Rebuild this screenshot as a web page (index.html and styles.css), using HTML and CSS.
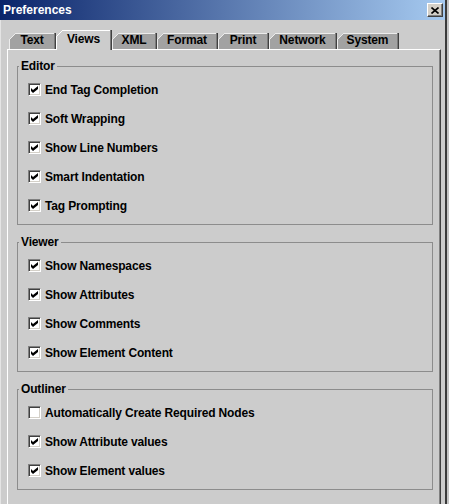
FILE: index.html
```html
<!DOCTYPE html>
<html>
<head>
<meta charset="utf-8">
<title>Preferences</title>
<link rel="stylesheet" href="styles.css">
</head>
<body>
<div class="window">
  <div class="titlebar">
    <span class="title">Preferences</span>
    <span class="close"><svg width="8" height="7" viewBox="0 0 8 7"><path d="M0.5 0.5 L7.5 6.5 M7.5 0.5 L0.5 6.5" stroke="#000" stroke-width="1.6" fill="none"/></svg></span>
  </div>
  <div class="client">
    <div class="tabs">
      <div class="tab t-text">Text</div>
      <div class="tab t-views active">Views</div>
      <div class="tab t-xml">XML</div>
      <div class="tab t-format">Format</div>
      <div class="tab t-print">Print</div>
      <div class="tab t-network">Network</div>
      <div class="tab t-system">System</div>
    </div>
    <div class="panel">
      <fieldset class="group">
        <legend>Editor</legend>
        <div class="row"><span class="cb on"></span><span>End Tag Completion</span></div>
        <div class="row"><span class="cb on"></span><span>Soft Wrapping</span></div>
        <div class="row"><span class="cb on"></span><span>Show Line Numbers</span></div>
        <div class="row"><span class="cb on"></span><span>Smart Indentation</span></div>
        <div class="row"><span class="cb on"></span><span>Tag Prompting</span></div>
      </fieldset>
      <fieldset class="group">
        <legend>Viewer</legend>
        <div class="row"><span class="cb on"></span><span>Show Namespaces</span></div>
        <div class="row"><span class="cb on"></span><span>Show Attributes</span></div>
        <div class="row"><span class="cb on"></span><span>Show Comments</span></div>
        <div class="row"><span class="cb on"></span><span>Show Element Content</span></div>
      </fieldset>
      <fieldset class="group">
        <legend>Outliner</legend>
        <div class="row"><span class="cb"></span><span>Automatically Create Required Nodes</span></div>
        <div class="row"><span class="cb on"></span><span>Show Attribute values</span></div>
        <div class="row"><span class="cb on"></span><span>Show Element values</span></div>
      </fieldset>
    </div>
  </div>
</div>
</body>
</html>
```

FILE: styles.css
```css
* { box-sizing: border-box; }
html, body { margin: 0; padding: 0; }
body {
  width: 449px;
  height: 504px;
  overflow: hidden;
  background: #c4c4c4;
  font-family: "Liberation Sans", Arial, sans-serif;
  font-size: 12px;
  font-weight: bold;
  color: #000;
  letter-spacing: -0.15px;
}
.window {
  width: 447px;
  height: 504px;
  background: #cccccc;
  border-right: 2px solid #3a3a3a;
  display: flex;
  flex-direction: column;
}
.titlebar {
  height: 20px;
  flex: none;
  display: flex;
  align-items: center;
  justify-content: space-between;
  background: linear-gradient(to right, #0a246a, #a6caf0);
  padding: 0 2px 0 3px;
}
.title { color: #fff; font-size: 12px; letter-spacing: 0; }
.close {
  width: 16px;
  height: 14px;
  background: #d4d0c8;
  border: 1px solid;
  border-color: #fff #404040 #404040 #fff;
  box-shadow: inset -1px -1px #808080;
  display: flex;
  align-items: center;
  justify-content: center;
}
.client {
  flex: 1;
  display: flex;
  flex-direction: column;
  border-left: 1px solid #e4e4e4;
  padding: 10px 4px 0 6px;
}
.tabs {
  display: flex;
  align-items: flex-end;
  height: 19px;
  padding-left: 2px;
  position: relative;
  z-index: 1;
}
.tab {
  flex: none;
  height: 16px;
  display: flex;
  align-items: center;
  justify-content: center;
  padding-bottom: 2px;
  border-right: 1px solid #404040;
  background:
    linear-gradient(135deg, #cccccc 0 4.3px, #ececec 4.3px 5.6px, transparent 5.6px),
    linear-gradient(#ececec, #ececec) top left / 100% 1px no-repeat,
    linear-gradient(#ececec, #ececec) top left / 1px 100% no-repeat,
    #a2a2a2;
  box-shadow: inset -1px 0 #7a7a7a;
}
.t-text { width: 47px; }
.t-views { width: 56px; }
.t-xml { width: 45px; }
.t-format { width: 61px; }
.t-print { width: 51px; }
.t-network { width: 68px; }
.t-system { width: 62px; }
.tab.active {
  height: 20px;
  margin-bottom: -1px;
  padding-bottom: 2px;
  background:
    linear-gradient(135deg, #cccccc 0 4.3px, #fff 4.3px 5.6px, transparent 5.6px),
    linear-gradient(#fff, #fff) top left / 100% 1px no-repeat,
    linear-gradient(#fff, #fff) top left / 1px 100% no-repeat,
    #cccccc;
}
.panel {
  flex: 1;
  border-top: 1px solid #fff;
  border-left: 1px solid #fff;
  border-right: 1px solid #404040;
  box-shadow: inset -1px 0 #808080;
  padding: 9px 7px 0 9px;
}
.group {
  margin: 0;
  min-width: 0;
  border: 1px solid #8c8c8c;
  padding: 2px 0 4px 0;
}
.group + .group { margin-top: 10px; }
.group legend {
  padding: 0 2px;
  margin-left: 1px;
  line-height: 14px;
}
.row {
  height: 29px;
  display: flex;
  align-items: center;
  gap: 4px;
  padding-left: 10px;
}
.cb {
  width: 13px;
  height: 13px;
  flex: none;
  border: 1px solid;
  border-color: #808080 #fff #fff #808080;
  box-shadow: inset 1px 1px #404040, inset -1px -1px #d4d0c8;
  background: #fff;
  position: relative;
}
.cb.on::after {
  content: "";
  position: absolute;
  left: 2px;
  top: 2px;
  width: 7px;
  height: 7px;
  background: #000;
  clip-path: polygon(0 2px, 2px 4px, 7px 0, 7px 3px, 2px 7px, 0 5px);
}
```
